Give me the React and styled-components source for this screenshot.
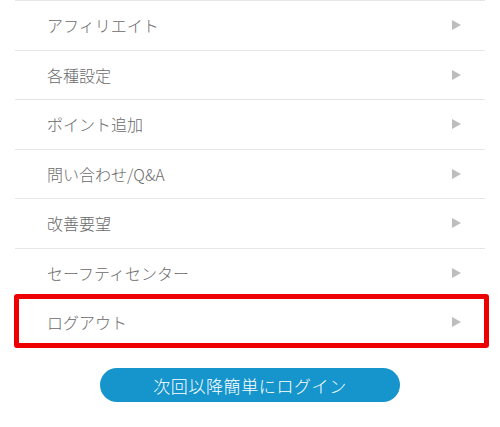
import React from "react";
import styled, { createGlobalStyle } from "styled-components";

const Global = createGlobalStyle`
  html, body { margin: 0; padding: 0; background: #fff; }
  body { font-family: "Noto Sans CJK JP", "Noto Sans", sans-serif; }
`;

const Page = styled.div`
  padding: 0 15px;
  display: flex;
  flex-direction: column;
`;

const List = styled.ul`
  list-style: none;
  margin: 0;
  padding: 0;
`;

const Row = styled.li`
  position: relative;
  box-sizing: border-box;
  height: 49.5px;
  border-top: 1px solid #e6e6e6;
  display: flex;
  align-items: center;
  justify-content: space-between;
  padding: 0 24px 0 32px;
  font-size: 16px;
  font-weight: 300;
  color: #6a6a6a;
`;

const Label = styled.span`
  line-height: 1;
`;

const Arrow = styled.span`
  width: 0;
  height: 0;
  border-top: 5px solid transparent;
  border-bottom: 5px solid transparent;
  border-left: 9px solid #bdbdbd;
`;

const Highlight = styled.span`
  position: absolute;
  left: -1px;
  right: -4px;
  top: -4px;
  bottom: -1.5px;
  border: 5px solid #ee0000;
  border-radius: 3px;
  pointer-events: none;
`;

const ButtonWrap = styled.div`
  display: flex;
  justify-content: center;
  margin-top: 21.5px;
`;

const LoginButton = styled.button`
  width: 300px;
  height: 34px;
  border: none;
  border-radius: 17px;
  background: #1595cc;
  color: #fff;
  font-family: "Noto Sans CJK JP", "Noto Sans", sans-serif;
  font-size: 17px;
  font-weight: 300;
  padding: 0;
  letter-spacing: 0.6px;
`;

const items = [
  "アフィリエイト",
  "各種設定",
  "ポイント追加",
  "問い合わせ/Q&A",
  "改善要望",
  "セーフティセンター",
];

export default function App() {
  return (
    <>
      <Global />
      <Page>
        <List>
          {items.map((t) => (
            <Row key={t}>
              <Label>{t}</Label>
              <Arrow />
            </Row>
          ))}
          <Row>
            <Label>ログアウト</Label>
            <Arrow />
            <Highlight />
          </Row>
        </List>
        <ButtonWrap>
          <LoginButton>次回以降簡単にログイン</LoginButton>
        </ButtonWrap>
      </Page>
    </>
  );
}
